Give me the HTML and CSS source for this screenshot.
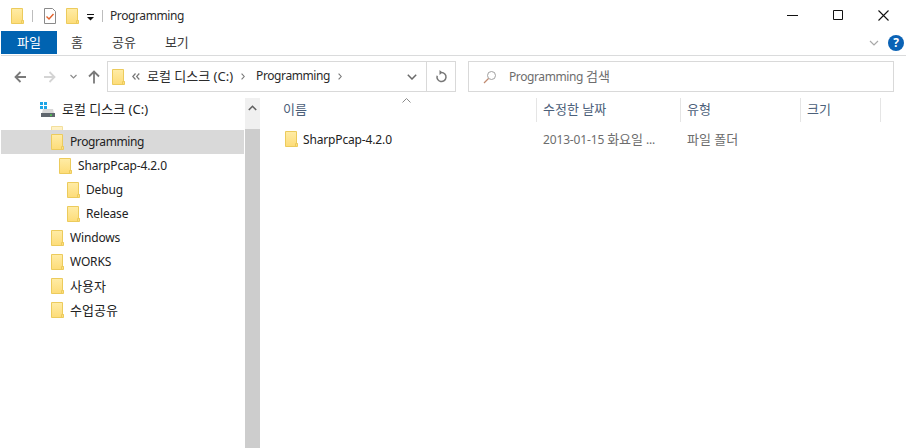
FILE: index.html
```html
<!DOCTYPE html>
<html lang="ko">
<head>
    <meta charset="UTF-8">
    <title>Programming</title>
    <link rel="stylesheet" href="styles.css">
</head>
<body>
    <svg class="defs" width="0" height="0">
        <defs>
            <linearGradient id="folder-fill" x1="0" y1="0" x2="0" y2="1">
                <stop offset="0" stop-color="#ffeca6"/>
                <stop offset="1" stop-color="#fddc78"/>
            </linearGradient>
            <symbol id="folder" viewBox="0 0 13 16">
                <path d="M.5.5h11v12h1v3H.5z" fill="url(#folder-fill)" stroke="#eccb5c"/>
                <path d="M10.5 15.5v-3h2" fill="none" stroke="#eccb5c"/>
            </symbol>
        </defs>
    </svg>

    <div class="titlebar">
        <svg class="folder"><use href="#folder"/></svg>
        <span class="qat-sep qat-sep-a"></span>
        <svg class="check-icon" width="12" height="16" viewBox="0 0 12 16">
            <path d="M.5.5h8l3 3v12H.5z" fill="#fff" stroke="#8a8a8a"/>
            <path d="M2.5 8.5l2.5 2.5 4.5-5" fill="none" stroke="#e2622c" stroke-width="1.4"/>
        </svg>
        <svg class="folder folder-b"><use href="#folder"/></svg>
        <svg class="qat-drop" width="7" height="7" viewBox="0 0 7 7">
            <path d="M0 .5h7" stroke="#111"/>
            <path d="M0 3h7L3.5 6.5z" fill="#111"/>
        </svg>
        <span class="qat-sep qat-sep-b"></span>
        <span class="title-text tight">Programming</span>
        <div class="window-btns">
            <svg width="11" height="11" viewBox="0 0 11 11"><path d="M0 5.500h11" stroke="#111"/></svg>
            <svg width="11" height="11" viewBox="0 0 11 11"><path d="M.5.5h9v9h-9z" fill="none" stroke="#111"/></svg>
            <svg width="11" height="11" viewBox="0 0 11 11"><path d="M.5.5l10 10M10.500.5l-10 10" stroke="#111" stroke-width="1.100"/></svg>
        </div>
    </div>

    <div class="ribbon">
        <div class="tab tab-file">파일</div>
        <div class="tab tab-home">홈</div>
        <div class="tab tab-share">공유</div>
        <div class="tab tab-view">보기</div>
        <svg class="ribbon-chevron" width="10" height="6" viewBox="0 0 10 6"><path d="M1 1l4 4 4-4" fill="none" stroke="#a9a9a9" stroke-width="1.200"/></svg>
        <div class="help-btn">?</div>
    </div>

    <div class="navbar">
        <svg class="nav-arrow" width="12" height="12" viewBox="0 0 12 12"><path d="M12 6H2M6.500 1L1.500 6l5 5" fill="none" stroke="#7a7a7a" stroke-width="1.800"/></svg>
        <svg class="nav-arrow nav-forward" width="12" height="12" viewBox="0 0 12 12"><path d="M0 6h10M5.500 1l5 5-5 5" fill="none" stroke="#d4d4d4" stroke-width="1.800"/></svg>
        <svg class="nav-recent" width="7" height="5" viewBox="0 0 7 5"><path d="M.5 1l3 3 3-3" fill="none" stroke="#8c8c8c" stroke-width="1.200"/></svg>
        <svg class="nav-up" width="12" height="14" viewBox="0 0 12 14"><path d="M6 13.500V2M1 6.500l5-5 5 5" fill="none" stroke="#7a7a7a" stroke-width="1.800"/></svg>

        <div class="address-box">
            <svg class="folder"><use href="#folder"/></svg>
            <svg class="crumb-more" width="8" height="7" viewBox="0 0 8 7"><path d="M3.500.5L.8 3.500l2.700 3M7.300.5L4.600 3.500l2.700 3" fill="none" stroke="#777" stroke-width="1.200"/></svg>
            <span class="crumb ko">로컬 디스크 (C:)</span>
            <svg class="crumb-sep" width="4" height="7" viewBox="0 0 4 7"><path d="M.6.6l2.600 2.900L.6 6.400" fill="none" stroke="#777" stroke-width="1.100"/></svg>
            <span class="crumb tight">Programming</span>
            <svg class="crumb-sep" width="4" height="7" viewBox="0 0 4 7"><path d="M.6.6l2.600 2.900L.6 6.400" fill="none" stroke="#777" stroke-width="1.100"/></svg>
            <svg class="address-drop" width="10" height="6" viewBox="0 0 10 6"><path d="M.8.8L5 5l4.200-4.200" fill="none" stroke="#6a6a6a" stroke-width="1.500"/></svg>
            <div class="refresh-btn">
                <svg width="12" height="13" viewBox="0 0 12 13"><path d="M6.500 2.500a4.500 4.500 0 1 1-4.300 3.200" fill="none" stroke="#777" stroke-width="1.500"/><path d="M4.500 0v5l3-2.500z" fill="#777"/></svg>
            </div>
        </div>

        <div class="search-box">
            <svg width="14" height="14" viewBox="0 0 14 14"><circle cx="8.500" cy="5.500" r="4" fill="none" stroke="#a0a0a0"/><path d="M5.500 8.500L1 13" stroke="#c08a70" stroke-width="1.200"/></svg>
            <span class="search-text"><span class="tight">Programming</span> <span class="ko">검색</span></span>
        </div>
    </div>

    <div class="content">
        <div class="nav-pane">
            <div class="tree">
                <div class="tree-row drive-row">
                    <svg width="15" height="15" viewBox="0 0 15 15">
                        <path d="M0 0h3v3H0zM4 0h3v3H4zM0 4h3v3H0zM4 4h3v3H4z" fill="#1ea5e6"/>
                        <path d="M3 7h10l1 4H2z" fill="#d8d8d8"/>
                        <path d="M1 11h14v4H1z" fill="#5f666d"/>
                        <path d="M10 12.500h2v1.200h-2z" fill="#4de04d"/>
                    </svg>
                    <span class="ko">로컬 디스크 (C:)</span>
                </div>
                <div class="tree-clip">
                    <svg class="folder"><use href="#folder"/></svg>
                </div>
                <div class="tree-row tree-selected indent-1"><svg class="folder"><use href="#folder"/></svg><span class="tight">Programming</span></div>
                <div class="tree-row indent-2"><svg class="folder"><use href="#folder"/></svg><span>SharpPcap-4.2.0</span></div>
                <div class="tree-row indent-3"><svg class="folder"><use href="#folder"/></svg><span>Debug</span></div>
                <div class="tree-row indent-3"><svg class="folder"><use href="#folder"/></svg><span>Release</span></div>
                <div class="tree-row indent-1"><svg class="folder"><use href="#folder"/></svg><span>Windows</span></div>
                <div class="tree-row indent-1"><svg class="folder"><use href="#folder"/></svg><span>WORKS</span></div>
                <div class="tree-row indent-1"><svg class="folder"><use href="#folder"/></svg><span class="ko">사용자</span></div>
                <div class="tree-row indent-1"><svg class="folder"><use href="#folder"/></svg><span class="ko">수업공유</span></div>
            </div>
            <div class="scrollbar">
                <div class="scroll-up">
                    <svg width="9" height="6" viewBox="0 0 9 6"><path d="M.8 5L4.500 1.300 8.200 5" fill="none" stroke="#606060" stroke-width="1.600"/></svg>
                </div>
                <div class="scroll-thumb"></div>
            </div>
        </div>

        <div class="file-pane">
            <div class="col-header">
                <svg class="sort-arrow" width="9" height="5" viewBox="0 0 9 5"><path d="M.5 4.500l4-4 4 4" fill="none" stroke="#8a8a8a"/></svg>
                <div class="col col-name ko">이름</div>
                <div class="col col-date ko">수정한 날짜</div>
                <div class="col col-type ko">유형</div>
                <div class="col col-size ko">크기</div>
            </div>
            <div class="file-row">
                <div class="cell cell-name"><svg class="folder"><use href="#folder"/></svg><span>SharpPcap-4.2.0</span></div>
                <div class="cell cell-date">2013-01-15 <span class="ko">화요일</span> ...</div>
                <div class="cell cell-type ko">파일 폴더</div>
            </div>
        </div>
    </div>
</body>
</html>
```

FILE: styles.css
```css
html, body {
    margin: 0;
    padding: 0;
    height: 100%;
    overflow: hidden;
}

body {
    width: 907px;
    height: 448px;
    background-color: #fff;
    color: #1e1e1e;
    font-family: "Noto Sans", "Noto Sans CJK KR", sans-serif;
    font-size: 12px;
    letter-spacing: -.15px;
    display: flex;
    flex-direction: column;
}

.ko {
    font-size: 13px;
    letter-spacing: 0;
}

.tight {
    letter-spacing: -.4px;
}

.defs {
    position: absolute;
}

.folder {
    width: 13px;
    height: 16px;
    flex: none;
    display: block;
}

/* title bar */
.titlebar {
    height: 31px;
    flex: none;
    display: flex;
    align-items: center;
    padding-left: 11px;
}

.qat-sep {
    width: 1px;
    height: 12px;
    background-color: #bdbdbd;
    flex: none;
}

.qat-sep-a {
    margin-left: 8px;
}

.check-icon {
    margin-left: 11px;
    flex: none;
}

.folder-b {
    margin-left: 10px;
}

.qat-drop {
    margin-left: 8px;
    margin-top: 3px;
    flex: none;
}

.qat-sep-b {
    margin-left: 8px;
}

.title-text {
    margin-left: 7px;
    color: #2b2b2b;
}

.window-btns {
    margin-left: auto;
    width: 120px;
    padding-right: 18px;
    box-sizing: border-box;
    display: flex;
    justify-content: space-between;
    align-items: center;
}

/* ribbon tabs */
.ribbon {
    height: 24px;
    flex: none;
    margin-left: 1px;
    margin-right: 1px;
    border-bottom: 1px solid #dadbdc;
    display: flex;
    align-items: flex-start;
}

.tab {
    height: 23px;
    line-height: 23px;
    text-align: center;
    color: #3b3b3b;
    font-size: 13px;
    letter-spacing: 0;
}

.tab-file {
    width: 56px;
    background-color: #0063b1;
    color: #fff;
}

.tab-home {
    margin-left: 14px;
}

.tab-share {
    margin-left: 29px;
}

.tab-view {
    margin-left: 29px;
}

.ribbon-chevron {
    margin-left: auto;
    margin-top: 9px;
}

.help-btn {
    width: 16px;
    height: 16px;
    margin: 4px 2px 0 9px;
    border-radius: 50%;
    background-color: #0a62b5;
    color: #fff;
    font-size: 12px;
    font-weight: bold;
    line-height: 16px;
    text-align: center;
}

/* navigation bar */
.navbar {
    height: 41px;
    flex: none;
    display: flex;
    align-items: center;
}

.nav-arrow {
    margin-left: 14px;
    flex: none;
}

.nav-forward {
    margin-left: 18px;
}

.nav-recent {
    margin-left: 14px;
    flex: none;
}

.nav-up {
    margin-left: 11px;
    flex: none;
}

.address-box {
    width: 343px;
    height: 29px;
    margin-left: 7px;
    border: 1px solid #d9d9d9;
    display: flex;
    align-items: center;
    padding-left: 4px;
}

.crumb-more {
    margin-left: 7px;
    flex: none;
}

.crumb {
    margin-left: 7px;
    margin-bottom: 2px;
    white-space: nowrap;
    color: #2b2b2b;
}

.crumb-sep {
    margin-left: 8px;
    margin-right: 4px;
    flex: none;
}

.address-drop {
    margin-left: auto;
    flex: none;
}

.refresh-btn {
    width: 29px;
    height: 29px;
    margin-left: 9px;
    box-sizing: border-box;
    border-left: 1px solid #d9d9d9;
    display: flex;
    align-items: center;
    justify-content: center;
    flex: none;
}

.search-box {
    width: 424px;
    height: 29px;
    margin-left: 12px;
    border: 1px solid #d9d9d9;
    display: flex;
    align-items: center;
    color: #6d6d6d;
}

.search-box svg {
    margin-left: 14px;
}

.search-text {
    margin-left: 12px;
    margin-bottom: 2px;
}

/* main area */
.content {
    flex: 1;
    display: flex;
    min-height: 0;
}

.nav-pane {
    width: 260px;
    flex: none;
    display: flex;
}

.tree {
    width: 245px;
    flex: none;
    overflow: hidden;
}

.tree-row {
    height: 24px;
    display: flex;
    align-items: center;
    margin-left: 1px;
    margin-right: 1px;
    color: #222;
}

.tree-row span {
    margin-left: 6px;
    margin-bottom: 2px;
}

.drive-row {
    padding-left: 39px;
}

.drive-row span {
    margin-left: 7px;
}

.tree-clip {
    height: 9px;
    margin-left: 51px;
    overflow: hidden;
    display: flex;
    align-items: flex-end;
}

.tree-clip .folder {
    margin-bottom: -12px;
    opacity: .6;
}

.tree-selected {
    background-color: #d9d9d9;
}

.indent-1 {
    padding-left: 50px;
}

.indent-2 {
    padding-left: 58px;
}

.indent-3 {
    padding-left: 66px;
}

.scrollbar {
    width: 15px;
    margin-top: 1px;
    flex: none;
    display: flex;
    flex-direction: column;
}

.scroll-up {
    height: 31px;
    background-color: #f0f0f0;
    display: flex;
    justify-content: center;
    padding-top: 7px;
    box-sizing: border-box;
}

.scroll-thumb {
    flex: 1;
    background-color: #cdcdcd;
}

/* file list */
.file-pane {
    flex: 1;
    min-width: 0;
    padding-top: 1px;
}

.col-header {
    height: 24px;
    display: flex;
    position: relative;
    color: #4c607a;
}

.sort-arrow {
    position: absolute;
    left: 142px;
    top: 0;
}

.col {
    height: 24px;
    line-height: 22px;
    box-sizing: border-box;
    border-right: 1px solid #e5e5e5;
    padding-left: 6px;
}

.col-name {
    width: 277px;
    padding-left: 23px;
}

.col-date {
    width: 144px;
}

.col-type {
    width: 120px;
}

.col-size {
    width: 80px;
}

.file-row {
    height: 24px;
    margin-top: 5px;
    display: flex;
    align-items: center;
    color: #6d6d6d;
}

.cell-name {
    width: 277px;
    padding-left: 25px;
    box-sizing: border-box;
    display: flex;
    align-items: center;
    color: #222;
}

.cell-name span {
    margin-left: 5px;
}

.cell-date {
    width: 144px;
    padding-left: 6px;
    margin-bottom: 1px;
    box-sizing: border-box;
}

.cell-type {
    width: 120px;
    padding-left: 6px;
    margin-bottom: 2px;
    box-sizing: border-box;
}
```
